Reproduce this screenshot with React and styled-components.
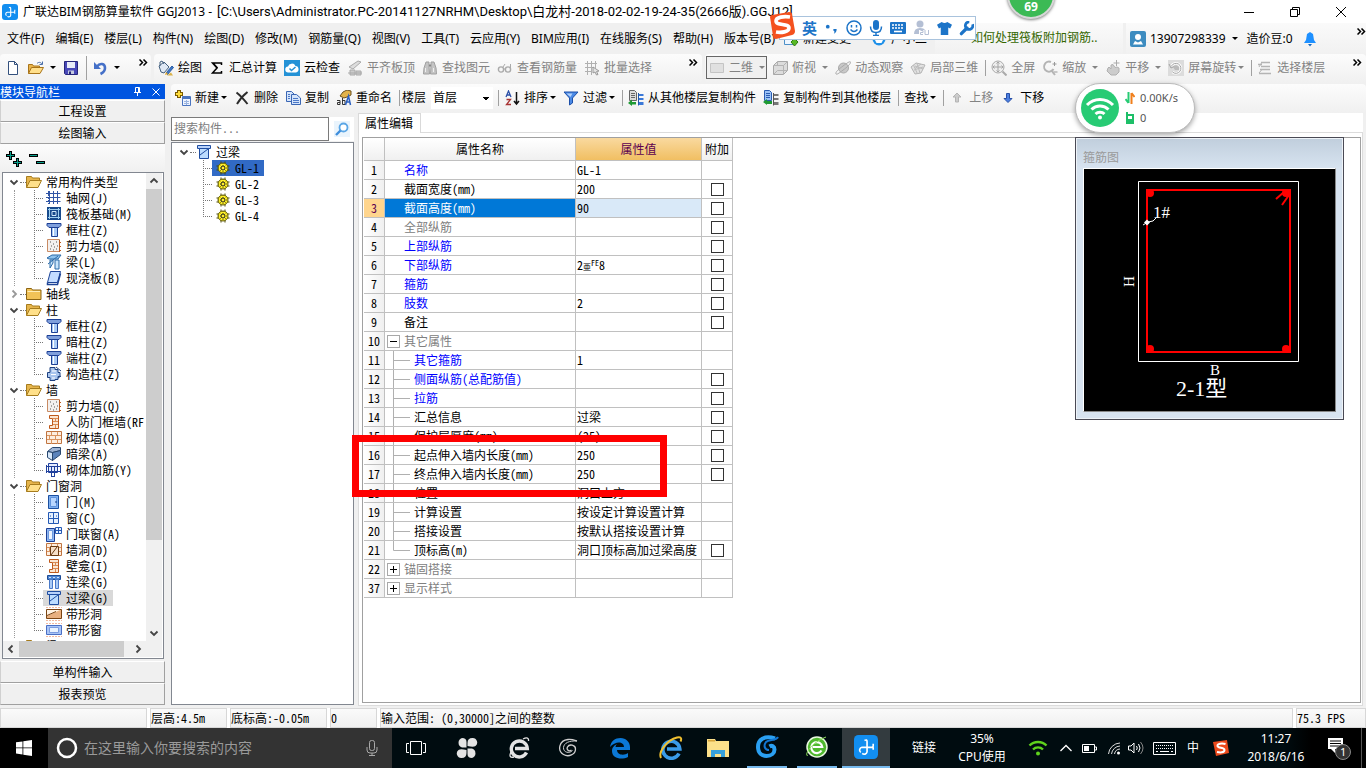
import styled, { createGlobalStyle, css } from "styled-components";

const UI_FONT = `"Noto Sans", "Noto Sans CJK SC", sans-serif`;
const SONG_FONT = `"Noto Sans CJK SC", "Liberation Mono", monospace`;

/* ---------- data ---------- */

const menus = [
  "文件(F)",
  "编辑(E)",
  "楼层(L)",
  "构件(N)",
  "绘图(D)",
  "修改(M)",
  "钢筋量(Q)",
  "视图(V)",
  "工具(T)",
  "云应用(Y)",
  "BIM应用(I)",
  "在线服务(S)",
  "帮助(H)",
  "版本号(B)"
];

const drawTools = [
  { icon: "paint", label: "绘图" },
  { icon: "sigma", label: "汇总计算" },
  { icon: "cloud", label: "云检查" },
  { icon: "alignTop", label: "平齐板顶", off: true },
  { icon: "binoculars", label: "查找图元", off: true },
  { icon: "glasses", label: "查看钢筋量", off: true },
  { icon: "batch", label: "批量选择", off: true }
];

const viewTools = [
  { icon: "cube", label: "俯视", arrow: "wide" },
  { icon: "planet", label: "动态观察" },
  { icon: "part3d", label: "局部三维" },
  { sep: true },
  { icon: "fullscreen", label: "全屏" },
  { icon: "zoom", label: "缩放", arrow: "wide" },
  { icon: "pan", label: "平移", arrow: "wide" },
  { icon: "rotate", label: "屏幕旋转", arrow: "tight" },
  { sep: true },
  { icon: "floors", label: "选择楼层" }
];

const navTree = [
  {
    label: "常用构件类型",
    open: true,
    items: [
      { icon: "axis", label: "轴网(J)" },
      { icon: "raft", label: "筏板基础(M)" },
      { icon: "column", label: "框柱(Z)" },
      { icon: "shear", label: "剪力墙(Q)" },
      { icon: "beam", label: "梁(L)" },
      { icon: "slab", label: "现浇板(B)" }
    ]
  },
  { label: "轴线", open: false, items: [] },
  {
    label: "柱",
    open: true,
    items: [
      { icon: "column", label: "框柱(Z)" },
      { icon: "column", label: "暗柱(Z)" },
      { icon: "column", label: "端柱(Z)" },
      { icon: "structCol", label: "构造柱(Z)" }
    ]
  },
  {
    label: "墙",
    open: true,
    items: [
      { icon: "shear", label: "剪力墙(Q)" },
      { icon: "niche", label: "人防门框墙(RF" },
      { icon: "brick", label: "砌体墙(Q)" },
      { icon: "hidden", label: "暗梁(A)" },
      { icon: "rebar", label: "砌体加筋(Y)" }
    ]
  },
  {
    label: "门窗洞",
    open: true,
    items: [
      { icon: "door", label: "门(M)" },
      { icon: "window", label: "窗(C)" },
      { icon: "doorWindow", label: "门联窗(A)" },
      { icon: "hole", label: "墙洞(D)" },
      { icon: "niche", label: "壁龛(I)" },
      { icon: "linkBeam", label: "连梁(G)" },
      { icon: "lintel", label: "过梁(G)", active: true },
      { icon: "stripHole", label: "带形洞" },
      { icon: "stripWindow", label: "带形窗" }
    ]
  },
  { label: "梁", open: true, items: [] }
];

const members = ["GL-1", "GL-2", "GL-3", "GL-4"];

const properties = [
  { no: 1, name: "名称", color: "blue", value: "GL-1", noBox: true },
  { no: 2, name: "截面宽度(mm)", value: "200" },
  { no: 3, name: "截面高度(mm)", value: "90", current: true },
  { no: 4, name: "全部纵筋", color: "gray", value: "" },
  { no: 5, name: "上部纵筋", color: "blue", value: "" },
  { no: 6, name: "下部纵筋", color: "blue", value: "2", steel: "8" },
  { no: 7, name: "箍筋", color: "blue", value: "" },
  { no: 8, name: "肢数", color: "blue", value: "2" },
  { no: 9, name: "备注", value: "" },
  { no: 10, name: "其它属性", color: "gray", value: "", toggle: "-", noBox: true },
  { no: 11, name: "其它箍筋", color: "blue", value: "1", child: true, noBox: true },
  { no: 12, name: "侧面纵筋(总配筋值)", color: "blue", value: "", child: true },
  { no: 13, name: "拉筋", color: "blue", value: "", child: true },
  { no: 14, name: "汇总信息", value: "过梁", child: true },
  { no: 15, name: "保护层厚度(mm)", value: "(25)", child: true },
  { no: 16, name: "起点伸入墙内长度(mm)", value: "250", child: true },
  { no: 17, name: "终点伸入墙内长度(mm)", value: "250", child: true },
  { no: 18, name: "位置", value: "洞口上方", child: true, noBox: true },
  { no: 19, name: "计算设置", value: "按设定计算设置计算", child: true, noBox: true },
  { no: 20, name: "搭接设置", value: "按默认搭接设置计算", child: true, noBox: true },
  { no: 21, name: "顶标高(m)", value: "洞口顶标高加过梁高度", child: true, last: true },
  { no: 22, name: "锚固搭接", color: "gray", value: "", toggle: "+", noBox: true },
  { no: 37, name: "显示样式", color: "gray", value: "", toggle: "+", noBox: true }
];

/* ---------- icons ---------- */

const columnShape = (
  <g>
    <path d="M1 1.500h14v2l-2 2H3l-2-2z" fill="#7f9fdc" stroke="#1c3f94" />
    <path d="M5.500 5.500h6v9h-6z" fill="#a9cbf7" stroke="#1c3f94" />
    <path d="M7.500 6v8" stroke="#fff" />
  </g>
);

const brickLines = (
  <path d="M1 5.500h14M1 9.500h14M5.500 2v3.500M11.500 2v3.500M3.500 6v3M9.500 6v3M5.500 10v4M11.500 10v4" stroke="#d9935f" />
);

const art = {
  newFile: (
    <>
      <path d="M3.500 1.500h6l3 3v10h-9z" fill="#fff" stroke="#33507d" />
      <path d="M9.500 1.500v3h3" fill="none" stroke="#33507d" />
    </>
  ),
  openFile: (
    <>
      <path d="M.5 13.500v-9h4l1 1.500h6v2" fill="#e9b44c" stroke="#a8741a" />
      <path d="M.5 13.500l3-6h12l-3.500 6z" fill="#ffdf8b" stroke="#a8741a" />
      <path d="M9 3.500c2-2 4-1 5 .5M14.500 1.500v3h-3" fill="none" stroke="#4a6ea9" />
    </>
  ),
  save: (
    <>
      <path d="M1.500 1.500h13v13h-12l-1-1z" fill="#4848b8" stroke="#26267a" />
      <path d="M4 2h8v6H4z" fill="#e8ecf8" />
      <path d="M5 10.500h6V14H5z" fill="#c5cbe0" />
      <path d="M6 11.500h2V14H6z" fill="#26267a" />
    </>
  ),
  undo: (
    <>
      <path d="M5 6.500c3-4 8-3 8 1.500 0 2.500-1.500 4.500-4.500 6" fill="none" stroke="#4570c8" strokeWidth="2.600" />
      <path d="M2 2v7h7z" fill="#4570c8" />
    </>
  ),
  paint: (
    <>
      <path d="M1 6l5-4 5 5-5 6-3-1z" fill="#dfe8f4" stroke="#44607f" />
      <path d="M2 6V2l2-1 2 3" fill="none" stroke="#44607f" />
      <path d="M8 13l6-7 1.500 1.500-6 7z" fill="#3c78c8" stroke="#2a5ca4" />
      <path d="M7 15l1-3 2 2z" fill="#e3a827" />
      <path d="M9 15.500h6l-2-3z" fill="#d9b24a" />
    </>
  ),
  sigma: <path d="M12.500 5V3h-9l4.500 5-4.500 5h9v-2M4 3l4.500 5M4 13h8" fill="none" stroke="#000" strokeWidth="1.500" />,
  cloud: (
    <>
      <rect width="16" height="16" fill="#2492d6" />
      <path d="M4.500 12.500a3 3 0 0 1-.5-6 4 4 0 0 1 7.500-.5 3.300 3.300 0 0 1 .5 6.500z" fill="#fff" />
      <path d="M5.500 8.500l2 2 4-3.500" fill="none" stroke="#2492d6" strokeWidth="1.500" />
    </>
  ),
  alignTop: (
    <>
      <path d="M2 7l9-6 3 1-8 7z" fill="#ddd" stroke="#aaa" />
      <path d="M3 10h5v5H3zM9 11h5v4H9zM1 13h14" fill="#ccc" stroke="#aaa" />
    </>
  ),
  binoculars: (
    <>
      <path d="M4 2h3v4l.5 8h-6L2 8zM9 2h3l2 6 .5 6h-6L9 6z" fill="#c4c4c4" stroke="#a0a0a0" />
      <path d="M7 5.500h2" stroke="#888" strokeWidth="2" />
      <path d="M3.500 8v4M11.500 8v4" stroke="#eee" />
    </>
  ),
  glasses: (
    <>
      <circle cx="4" cy="9.500" r="2.600" fill="none" stroke="#aaa" strokeWidth="1.400" />
      <circle cx="11" cy="9.500" r="2.600" fill="none" stroke="#aaa" strokeWidth="1.400" />
      <path d="M6.500 9h2M6 7l2-3M13.500 8V4" fill="none" stroke="#aaa" />
    </>
  ),
  batch: (
    <>
      <path d="M1 3.500h12M1 7.500h9M1 11.500h7M3.500 1v14M7.500 1v14M11.500 1v7" stroke="#b0b0b0" />
      <path d="M9 7l6 4-2.500.5 1.500 3-1.500.5-1.500-3-2 1z" fill="#e4e4e4" stroke="#999" />
    </>
  ),
  flat: <path d="M1.500 3.500h13v9h-13z" fill="#e0e0e0" stroke="#c4c4c4" />,
  cube: (
    <>
      <path d="M1.500 5.500l4-4h10v9l-4 4h-10z" fill="#dcdcdc" stroke="#a8a8a8" />
      <path d="M1.500 5.500h10v9M11.500 5.500l4-4M5.500 1.500v4M1.500 14.500l4-4h10" fill="none" stroke="#b4b4b4" />
    </>
  ),
  planet: (
    <>
      <circle cx="8.500" cy="8" r="5" fill="#c8c8c8" stroke="#aaa" />
      <path d="M1 14c-1-2 3-5 7-8s7-5 7.500-4-2 4-6 7-7.500 6-8.500 5z" fill="none" stroke="#aaa" />
    </>
  ),
  part3d: (
    <>
      <path d="M1 7l5-4 9 2-4 8-6 1z" fill="#e2e2e2" stroke="#b4b4b4" />
      <path d="M3.500 5l4 9M7 3.500l3 9.500M11 4l-6 4.500M13 7l-9 3M5 6l8 3" fill="none" stroke="#bcbcbc" />
    </>
  ),
  fullscreen: (
    <>
      <circle cx="7" cy="7" r="6" fill="#eee" stroke="#aaa" />
      <path d="M7 2v10M2 7h10M5.500 3.500L7 2l1.500 1.500M5.500 10.500L7 12l1.500-1.500M3.500 5.500L2 7l1.500 1.500M10.500 5.500L12 7l-1.500 1.500" fill="none" stroke="#a4a4a4" />
      <path d="M11.500 11.500l4 4" stroke="#aaa" strokeWidth="2" />
    </>
  ),
  zoom: (
    <>
      <path d="M9 2a5 5 0 1 0 2.500 7" fill="none" stroke="#b4b4b4" strokeWidth="2" />
      <path d="M10.500 4h4M12.500 2v4M11.500 12h4" stroke="#999" />
      <path d="M9 10l4 5" stroke="#b4b4b4" strokeWidth="2" />
    </>
  ),
  pan: (
    <>
      <path d="M3 8l1-1 2 2V5l2-.5 2 3 2-.500 2 1v4l-3 3H6l-4-4z" fill="#ccc" stroke="#b0b0b0" />
      <path d="M11.500 0v6M8.500 3h6" stroke="#aaa" />
    </>
  ),
  rotate: (
    <>
      <rect width="16" height="16" fill="#dcdcdc" />
      <path d="M3.500 6a5 5 0 1 1 1 6" fill="none" stroke="#fff" strokeWidth="2.500" />
      <path d="M3.500 6a5 5 0 1 1 1 6M1 4l2 4 4-2" fill="none" stroke="#a4a4a4" />
      <path d="M5 7l3-2 3 2v3H7z" fill="#bbb" />
    </>
  ),
  floors: (
    <>
      <path d="M1 4.500h4M4 2.500h9M4 6.500h9M3 9.500h10M2 13.500h12" fill="none" stroke="#b4b4b4" strokeWidth="1.600" />
      <path d="M4.500 3L2 7M5 9.500L2 13" stroke="#b4b4b4" />
    </>
  ),
  create: (
    <>
      <path d="M4 0v8M0 4h8" stroke="#7a5a00" strokeWidth="4" />
      <path d="M4 1v6M1 4h6" stroke="#ffdc3c" strokeWidth="2" />
      <path d="M7.500 6.500h8v9h-8z" fill="#eef4ff" stroke="#4a74c0" />
      <path d="M8 8h7" stroke="#4a74c0" strokeWidth="2" />
      <path d="M9 11.500h5M9 13.500h5M11.500 10v5" stroke="#9ab4e0" />
    </>
  ),
  remove: <path d="M2.500 2.500c4 3 7 6.500 11 11.500M13.500 2c-4 3-7.500 7-10.500 12" fill="none" stroke="#2c2c2c" strokeWidth="2" />,
  copy: (
    <>
      <path d="M1.500 1.500h5l3 3v7h-8z" fill="#d4e4fb" stroke="#3a66b4" />
      <path d="M6.500 4.500h5l4 3.500v6.500h-9z" fill="#d4e4fb" stroke="#3a66b4" />
      <path d="M3 4.500h2M3 6.500h2M3 8.500h2M8 8.500h5M8 10.500h6M8 12.500h6" stroke="#4c78c6" />
    </>
  ),
  rename: (
    <>
      <path d="M4 6l3-4 4-2 4 1v4l-4 2-3 1z" fill="#e2b34b" stroke="#6a5120" />
      <path d="M1 10.500h3v4H1.500v-2H4M6.500 8v6.500h2.500v-4H6.500" fill="none" stroke="#333" />
      <path d="M9.500 15l3-9 2 9M10 12h4" fill="none" stroke="#2a5fc0" strokeWidth="1.500" />
    </>
  ),
  sort: (
    <>
      <path d="M2 7l2.500-6L7 7M3 5h3" fill="none" stroke="#2b50a8" strokeWidth="1.300" />
      <path d="M2.500 9.500h4l-4 5h4.500" fill="none" stroke="#a83434" strokeWidth="1.300" />
      <path d="M12.500 2v11M10 11l2.500 3 2.500-3" fill="none" stroke="#111" strokeWidth="1.500" />
    </>
  ),
  filter: (
    <>
      <path d="M1 2h14l-5.500 6v5l-3 2V8z" fill="#4b8ae6" stroke="#1c4fa8" />
      <path d="M3.500 3.500h6L7.500 7z" fill="#b4d2fa" />
    </>
  ),
  copyFrom: (
    <>
      <path d="M1.500.5h5l2 2v8h-7z" fill="#dcdcdc" stroke="#666" />
      <path d="M3 3.500h4M3 5.500h4M3 7.500h4" stroke="#666" />
      <path d="M11 4h4.500v2H11zM11 8h4.500v2H11zM11 12h4.500v3H11z" fill="#3a78d8" />
      <path d="M10.500 3v12.500" stroke="#2458a8" />
      <path d="M0 13l4-3.500v2.500h4v2.500H4v1.500z" fill="#1f9a34" />
    </>
  ),
  copyTo: (
    <>
      <path d="M1.500.5h5l2 2v8h-7z" fill="#9cc2f6" stroke="#2a5cb0" />
      <path d="M3 3.500h4M3 5.500h4M3 7.500h4" stroke="#2a5cb0" />
      <path d="M11 4h4.500v2H11zM11 8h4.500v2H11zM11 12h4.500v3H11z" fill="#777" />
      <path d="M10.500 3v12.500" stroke="#555" />
      <path d="M0 12l4-3v2h5v3H4v1z" fill="#1f9a34" />
    </>
  ),
  moveUp: <path d="M8 3l4 4H9.500v5h-3V7H4z" fill="#ccc" stroke="#b4b4b4" />,
  moveDown: <path d="M8 12.500l4-4H9.500v-5h-3v5H4z" fill="#4b7fe0" stroke="#274fa8" />,
  folderOpen: (
    <>
      <path d="M.5 13.500v-11h5l1 1.500h7v3" fill="#e6b54c" stroke="#a67c1e" />
      <path d="M.5 13.500l3.500-7h11.500l-3.500 7z" fill="#ffe08a" stroke="#a67c1e" />
    </>
  ),
  folder: (
    <>
      <path d="M.5 13.500v-11h5l1 1.500h8.500v9.500z" fill="#f1c257" stroke="#8c6412" />
      <path d="M1.500 5.500h12.500" stroke="#ffeeb8" />
    </>
  ),
  axis: (
    <>
      <path d="M3.500 1v13M7.500 1v13M11.500 1v13M0 3.500h14M0 7.500h14M0 11.500h14" stroke="#3156a6" />
      <path d="M2.500 1v13M12.500 3.500h3M12.500 7.500h3M12.500 11.500h3" stroke="#3156a6" strokeDasharray="2 1" />
    </>
  ),
  raft: (
    <>
      <path d="M1 1h14v13H1z" fill="#174a8c" />
      <path d="M2 3.500h12M2 11.500h12M3.500 2v11M12.500 2v11" stroke="#9fd0f0" />
      <path d="M6 5.500h4v4H6z" fill="#174a8c" stroke="#cfe8fa" />
    </>
  ),
  column: columnShape,
  shear: (
    <>
      <path d="M1.500 1.500h12v12h-12z" fill="#f3f0ee" stroke="#c98b64" />
      <path d="M4 4h1M7 6h1M10 4h1M5 8h1M8 9h1M11 8h1M4 11h1M7 12h1M10 11h1" stroke="#555" />
      <path d="M13.500 2v12M13 4.500h2M13 8.500h2M13 12.500h2" stroke="#c05a1c" />
    </>
  ),
  beam: (
    <>
      <path d="M1 4l5-3h9l-3 4H3z" fill="#8fc3ee" stroke="#2a6aa8" />
      <path d="M4 6h3v3l-3 5zM9 6h4v9H9z" fill="#c8e4fa" stroke="#2a6aa8" />
      <path d="M2 10l10-8" stroke="#2a6aa8" />
    </>
  ),
  slab: (
    <>
      <path d="M4.500 1.500h10l-3 11h-10z" fill="#c3dcff" stroke="#1c4396" />
      <path d="M1.500 12.500v2h10l3-11" fill="none" stroke="#1c4396" strokeWidth="1.500" />
    </>
  ),
  structCol: (
    <>
      <path d="M4 1.500h5v2h3v3h2v4h-2v3H9v1H4v-3H1.500v-5H4z" fill="#a9c5ee" stroke="#1d4080" />
      <path d="M6 5h4M5 8.500h5M6 12h3" stroke="#fff" />
      <path d="M10 1l5 4M12 12l3-2" stroke="#1d4080" />
    </>
  ),
  niche: (
    <>
      <path d="M3.500 1.500h9v13h-9v-3h3v-7h-3z" fill="#fbe6d2" stroke="#c05a1c" />
      <path d="M7 4.500h5M7 7.500h5M7 10.500h5M9.500 5v3M9.500 11v3" stroke="#d98b54" />
    </>
  ),
  brick: (
    <>
      <path d="M.5 1.500h15v12H.5z" fill="#fdeee0" stroke="#c07440" />
      {brickLines}
    </>
  ),
  hidden: (
    <>
      <path d="M1.500 5.500l5-4h8v3l-8 2z" fill="#9fb4d4" stroke="#27466e" />
      <path d="M1.500 5.500l5 1v8l-5-3z" fill="#d7e8fa" stroke="#27466e" />
      <path d="M6.500 6.500l8-2v4l-8 6z" fill="#5c84bc" stroke="#27466e" />
    </>
  ),
  rebar: (
    <>
      <path d="M2.500 1.500h9v9h-9z" fill="#e4ecff" stroke="#20409c" />
      <path d="M0 4.500h15M0 9.500h15M5.500 4v11M8.500 4v11M.5 3v8M14.500 3v8M5 14.500h4" stroke="#20409c" />
    </>
  ),
  door: (
    <>
      <path d="M2.500 1.500h10v13h-10z" fill="#7fb0f0" stroke="#1b4fa0" />
      <path d="M4.500 3.500h6v9h-6z" fill="#b8d6ff" stroke="#5f92dc" />
      <path d="M9 8h2" stroke="#123a80" />
    </>
  ),
  window: (
    <>
      <path d="M2.500 2.500h10v11h-10z" fill="#e6f1ff" stroke="#2459b4" />
      <path d="M7.500 2v11M2 8.500h11" stroke="#2459b4" />
      <path d="M4 6h1M10 6h1" stroke="#2459b4" />
    </>
  ),
  doorWindow: (
    <>
      <path d="M.5 2.500h8v13h-8z" fill="#8fb8f2" stroke="#1d3f96" />
      <path d="M2.500 4.500h4v9h-4z" fill="#eef5ff" stroke="#6f9ae0" />
      <path d="M9.500 1.500h6v6h-6z" fill="#e6f1ff" stroke="#2459b4" />
      <path d="M12.500 1v7M9 4.500h7" stroke="#2459b4" />
    </>
  ),
  hole: (
    <>
      <path d="M.5 1.500h15v12H.5z" fill="#fdeee0" stroke="#c07440" />
      {brickLines}
      <path d="M4.500 4.500h8v9h-8z" fill="#f7dfc8" stroke="#6b3a12" />
      <path d="M5 13l6-8" stroke="#6b3a12" />
    </>
  ),
  linkBeam: (
    <>
      <path d="M1.500 1.500h13v4h-13z" fill="#4d86d4" stroke="#1d4a94" />
      <path d="M3.500 5.500h3v9h-3zM9.500 5.500h3v9h-3z" fill="#a9cbf7" stroke="#4a7ac8" />
      <path d="M3 3.500h2M7 3.500h2M11 3.500h2" stroke="#cfe0fa" />
    </>
  ),
  lintel: (
    <>
      <path d="M1.500 1.500h13v3h-13z" fill="#b8d2fa" stroke="#1f4da0" />
      <path d="M3.500 4.500h9v10h-9z" fill="#bcdcff" stroke="#1f4da0" />
      <path d="M4 11l4-3 4-3" fill="none" stroke="#1f4da0" />
    </>
  ),
  stripHole: (
    <>
      <path d="M0 1.500h16M0 14.500h16" stroke="#f2b8a0" strokeDasharray="2 1" />
      <path d="M.5 3.500h15v9H.5z" fill="#e8b080" stroke="#7a4514" />
      <path d="M1 10l13-6H1z" fill="#fff3e4" />
      <path d="M1 9.500l9-4" stroke="#7a4514" />
    </>
  ),
  stripWindow: (
    <>
      <path d="M0 1.500h16M0 14.500h16" stroke="#f2b8a0" strokeDasharray="2 1" />
      <path d="M.5 3.500h15v9H.5z" fill="#a8c4f6" stroke="#4a6ec4" />
      <path d="M3.500 5.500h9v5h-9z" fill="#eaf3ff" stroke="#7c9ce0" />
    </>
  ),
  gear: (
    <>
      <path d="M5.500 2.500h1M9.500 2.500h1M5.500 13.500h1M9.500 13.500h1M2.500 5.500v1M2.500 9.500v1M13.500 5.500v1M13.500 9.500v1" stroke="#4a4600" strokeWidth="2" />
      <circle cx="8" cy="8" r="5" fill="#fff02a" stroke="#5c5600" />
      <path d="M8 3v10M3 8h10M4.500 4.500l7 7M11.500 4.500l-7 7" stroke="#6e6800" strokeDasharray="1 1" />
      <circle cx="8" cy="8" r="2" fill="#fff02a" stroke="#222" />
    </>
  ),
  search: (
    <>
      <rect width="16" height="16" fill="#eaf4fc" />
      <circle cx="9.500" cy="6.500" r="4" fill="#fff" stroke="#5aa6e6" strokeWidth="1.800" />
      <path d="M6.500 9.500l-4.500 4.500" stroke="#3f8edc" strokeWidth="2.400" />
    </>
  ),
  user: (
    <>
      <rect width="16" height="16" rx="2" fill="#3d8cc0" />
      <circle cx="8" cy="6" r="3" fill="#fff" />
      <path d="M3 13.500l2-3.500 3 1.500 3-1.500 2 3.500z" fill="#fff" />
    </>
  ),
  bell: (
    <>
      <path d="M8 1l3 2 1 6 2 3H2l2-3 1-6z" fill="#1e90ff" />
      <path d="M6 13h4l-2 2.500z" fill="#1467c0" />
    </>
  ),
  addCase: (
    <>
      <path d="M1.500 4.500h9v9h-9z" fill="#eef6ff" stroke="#4d90c8" />
      <path d="M8 11l3.500-3.500L15 11l-3.500 4z" fill="#58b825" stroke="#2f7d10" />
    </>
  ),
  helper: (
    <>
      <circle cx="8" cy="8" r="6.500" fill="#1f90e8" />
      <path d="M4 9h8l-1.500 3h-5z" fill="#fff" />
    </>
  ),
  fileLogo: (
    <>
      <rect width="16" height="16" rx="3" fill="#128ef0" />
      <path d="M7 3.700q1.700-1 1.700.8v6.800a1.900 1.900 0 0 1-3.200 1M12.800 5.800v1.400a1 1 0 0 1-1 1H5.300a1.900 1.900 0 0 0-.8 3.400M12.800 8.200v1.600" fill="none" stroke="#fff" strokeWidth="1.100" />
    </>
  )
};

const Glyph = styled.svg`
  flex: none;
  display: block;
  width: ${(p) => p.$w || 16}px;
  height: ${(p) => p.$h || p.$w || 16}px;
`;

const MoreGlyph = styled(Glyph)`
  align-self: flex-start;
  margin-top: 5px;
`;

const Icon = ({ name, size }) => (
  <Glyph $w={size} viewBox="0 0 16 16" fill="none" aria-hidden="true">
    {art[name]}
  </Glyph>
);

const More = () => (
  <MoreGlyph $w={9} $h={7} viewBox="0 0 9 7" fill="none" aria-hidden="true">
    <path d="M.5.5l3 3-3 3M4.500.5l3 3-3 3" stroke="#000" strokeWidth="1.500" />
  </MoreGlyph>
);

const Chevron = ({ dir, color = "#444" }) => {
  const turn = { down: 0, left: 90, up: 180, right: 270 }[dir];
  return (
    <Glyph $w={12} viewBox="0 0 12 12" fill="none" aria-hidden="true">
      <path d="M2.500 4.500L6 8l3.500-3.500" stroke={color} strokeWidth="1.800" transform={`rotate(${turn} 6 6)`} />
    </Glyph>
  );
};

const Elbow = ({ last }) => (
  <Glyph $w={9} $h={16} viewBox="0 0 9 16" fill="none" aria-hidden="true">
    <path d={`M.5 0V${last ? 8 : 16}`} stroke="#777" strokeDasharray="1 1" />
    <path d="M0 8.500H9" stroke="#777" strokeDasharray="1 1" />
  </Glyph>
);

/* ---------- shell ---------- */

const GlobalStyle = createGlobalStyle`
  * { box-sizing: border-box; }
  body {
    margin: 0;
    overflow: hidden;
    background: #f0f0f0;
    font: 12px/16px ${UI_FONT};
    color: #000;
  }
  button, input, select { font: inherit; color: inherit; }
  ul { margin: 0; padding: 0; list-style: none; }
`;

const plainButton = css`
  border: 0;
  padding: 0;
  margin: 0;
  background: none;
  white-space: nowrap;
`;

const song = css`
  font-family: ${SONG_FONT};
  font-size: 12px;
  font-feature-settings: "hwid";
`;

const Page = styled.div`
  position: relative;
  display: flex;
  flex-direction: column;
  height: 100vh;
`;

const TitleBar = styled.header`
  display: flex;
  align-items: center;
  gap: 5px;
  height: 23px;
  padding-left: 2px;
  background: #fff;
  white-space: nowrap;
`;

const FilePath = styled.span`
  font-family: Roboto, "Noto Sans CJK SC", sans-serif;
  font-size: 13px;
`;

const WindowButtons = styled.div`
  display: flex;
  margin-left: auto;
  padding-right: 2px;
`;

const WindowButton = styled.button`
  ${plainButton}
  display: grid;
  place-items: center;
  width: 46px;
  height: 20px;
`;

const MenuBar = styled.nav`
  display: flex;
  height: 31px;
  line-height: 29px;
  white-space: nowrap;
`;

const MenuGroup = styled.div`
  display: flex;
  gap: 11px;
  padding-left: 7px;
`;

const MenuButton = styled.button`
  ${plainButton}
`;

const BeanButton = styled(MenuButton)`
  padding: 0 5px;
`;

const Promo = styled.div`
  display: flex;
  align-items: center;
  gap: 4px;
  padding-left: 8px;
`;

const Tip = styled.a`
  flex: 1;
  margin-left: 8px;
  padding-left: 36px;
  color: #336600;
  text-decoration: none;
  background: linear-gradient(#fafafa, #f1f1f1);
`;

const Account = styled.div`
  display: flex;
  align-items: center;
  gap: 4px;
  width: 240px;
  margin-left: 3px;
  padding-left: 4px;
  background: linear-gradient(#fafafa, #f1f1f1);
`;

const Spacer = styled.span`
  flex: ${(p) => p.$share || 1};
  min-width: ${(p) => p.$min || 0}px;
`;

const ToolRow = styled.div`
  display: flex;
  gap: 3px;
  height: 30px;
`;

const ToolStrip = styled.div`
  display: flex;
  align-items: center;
  gap: 7px;
  height: 29px;
  min-width: ${(p) => p.$min || 0}px;
  padding: 0 ${(p) => p.$right || 4}px 2px ${(p) => p.$left || 4}px;
  flex: ${(p) => (p.$grow ? 1 : "none")};
  border-radius: 4px;
  background: linear-gradient(#fcfcfc, #f0f0f0);
  white-space: nowrap;
`;

const ToolButton = styled.button`
  ${plainButton}
  display: flex;
  align-items: center;
  gap: 4px;
  color: ${(p) => (p.$off ? "#838383" : "#000")};
  ${(p) =>
    p.$framed &&
    css`
      width: 61px;
      height: 23px;
      margin-right: -2px;
      padding-left: 2px;
      border: 1px solid #666;
      background: #f0f0f0;
    `}
`;

const Arrow = styled.span`
  width: ${(p) => (p.$wide ? 8 : 4)}px;
  display: flex;
  justify-content: flex-end;

  &::after {
    content: "";
    flex: none;
    border: 3px solid transparent;
    border-top-color: currentColor;
    border-bottom: 0;
  }
`;

const Divider = styled.span`
  width: 1px;
  height: ${(p) => p.$h || 16}px;
  margin-right: -2px;
  background: #a0a0a0;
`;

const FloorLabel = styled.label`
  margin-left: -3px;
`;

const FloorSelect = styled.select`
  appearance: none;
  width: 62px;
  height: 22px;
  margin: 0 -2px;
  padding: 0 2px;
  border: 0;
  border-radius: 0;
  background:
    linear-gradient(#000, #000) 52px 10px / 6px 1px no-repeat,
    linear-gradient(#000, #000) 53px 11px / 4px 1px no-repeat,
    linear-gradient(#000, #000) 54px 12px / 2px 1px no-repeat,
    #fff;
`;

const Body = styled.main`
  display: flex;
  flex: 1;
  min-height: 0;
`;

/* ---------- module navigation ---------- */

const NavPanel = styled.aside`
  ${song}
  display: flex;
  flex-direction: column;
  width: 165px;
  padding-bottom: 3px;
`;

const NavTitle = styled.div`
  display: flex;
  align-items: center;
  height: 15px;
  margin-bottom: 1px;
  flex: none;
  padding-right: 4px;
  gap: 7px;
  color: #fff;
  background: #0055e0;
`;

const NavTitleButton = styled.button`
  ${plainButton}
  display: grid;
  place-items: center;
  width: 11px;
  height: 15px;
`;

const NavSection = styled.button`
  ${plainButton}
  height: 22px;
  flex: none;
  border: 1px solid #a0a0a0;
  border-top-color: #fff;
  border-left-color: #d0d0d0;
  background: #f0f0f0;
`;

const NavTools = styled.div`
  display: flex;
  align-items: center;
  gap: 7px;
  height: 28px;
  flex: none;
  padding: 2px 6px 0;
  background: linear-gradient(#fcfcfc, #f0f0f0);
`;

const NavTreeBox = styled.div`
  display: grid;
  grid-template: minmax(0, 1fr) 16px / minmax(0, 1fr) 16px;
  flex: 1;
  min-height: 0;
  margin: 0 1px 2px 2px;
  padding: 0 1px 1px 0;
  border: 1px solid #828790;
  background: #fff;
`;

const NavList = styled.ul`
  overflow: hidden;
  padding-top: 1px;
`;

const TreeRow = styled.div`
  display: flex;
  align-items: center;
  height: 16px;
  padding-left: ${(p) => p.$indent || 0}px;
  white-space: nowrap;
`;

const Dots = styled.span`
  width: 6px;
  border-top: 1px dotted #777;
`;

const Branch = styled.ul`
  margin-left: ${(p) => (p.$root ? 31 : 11)}px;
  padding-left: ${(p) => (p.$root ? 0 : 19)}px;
  border-left: ${(p) => (p.$root ? 0 : "1px dotted #999")};
`;

const TreeButton = styled.button`
  ${plainButton}
  display: flex;
  align-items: center;
  gap: 4px;
  height: 16px;
  line-height: 16px;
  padding: 0 5px 0 ${(p) => (p.$flush ? 0 : 3)}px;
  background: ${(p) => p.$bg || "none"};
`;

const VScroll = styled.div`
  display: flex;
  flex-direction: column;
  background: #f0f0f0;
`;

const HScroll = styled.div`
  display: flex;
  background: #f0f0f0;
`;

const ScrollButton = styled.button`
  ${plainButton}
  display: grid;
  place-items: center;
  width: 16px;
  height: 16px;
`;

const Thumb = styled.div`
  background: #cdcdcd;
  flex: ${(p) => p.$share};
`;

const Corner = styled.div`
  background: #f0f0f0;
`;

/* ---------- component list ---------- */

const WorkArea = styled.div`
  display: flex;
  flex-direction: column;
  flex: 1;
  min-width: 0;
  margin-left: 6px;
`;

const Panes = styled.div`
  display: flex;
  flex: 1;
  min-height: 0;
  gap: 4px;
`;

const ListPane = styled.section`
  ${song}
  display: flex;
  flex-direction: column;
  width: 183px;
  padding: 4px 0 3px;
`;

const SearchRow = styled.form`
  display: flex;
  align-items: center;
  height: 24px;
  margin-bottom: 1px;
  background: #fff;
`;

const SearchInput = styled.input`
  width: 158px;
  height: 24px;
  padding: 0 2px 4px;
  border: 1px solid #7a7a7a;

  &::placeholder {
    color: #808080;
  }
`;

const SearchButton = styled.button`
  ${plainButton}
  display: grid;
  place-items: center;
  flex: 1;
`;

const MemberTree = styled.div`
  flex: 1;
  padding-top: 1px;
  border: 1px solid #828790;
  background: #fff;
`;

/* ---------- property editor ---------- */

const Editor = styled.section`
  ${song}
  position: relative;
  display: flex;
  flex-direction: column;
  flex: 1;
  min-width: 0;
  margin-right: 3px;
  padding-bottom: 2px;
`;

const Tabs = styled.div`
  display: flex;
  height: 20px;
  background: #fff;
  border-bottom: 1px solid #dcdcdc;
`;

const Tab = styled.button`
  ${plainButton}
  height: 20px;
  padding: 0 7px 1px 6px;
  border: 1px solid #d9d9d9;
  border-bottom: 0;
  background: #fff;
`;

const GridFrame = styled.div`
  flex: 1;
  display: flex;
  min-height: 0;
  padding: 4px 1px 2px 3px;
  border: 1px solid #dcdcdc;
  border-top: 0;
  background: #fff;
`;

const Grid = styled.div`
  position: relative;
  flex: 1;
  border: 1px solid #a0a0a0;
  padding-left: 1px;
`;

const Table = styled.table`
  table-layout: fixed;
  width: 369px;
  border-collapse: separate;
  border-spacing: 0;

  th,
  td {
    height: 19px;
    padding: 0 1px;
    border: solid #c0c0c0;
    border-width: 0 1px 1px 0;
    line-height: 18px;
    font-weight: normal;
    white-space: nowrap;
    overflow: hidden;
  }

  thead th {
    height: 23px;
    padding: 0;
    background: linear-gradient(#fff, #f0f0f0);
  }
`;

const ValueHead = styled.th`
  && {
    color: #5c0050;
    background: linear-gradient(#f9d99f, #f1bf62);
  }
`;

const RowNo = styled.th`
  && {
    padding: 0;
    color: ${(p) => (p.$current ? "#5c0050" : "#000")};
    background: ${(p) => (p.$current ? "#ffd58d" : "linear-gradient(90deg, #fff, #f0f0f0)")};
  }
`;

const textColors = { blue: "#0000ff", gray: "#808080" };

const NameCell = styled.td`
  && {
    padding: 0;
    color: ${(p) => (p.$current ? "#fff" : textColors[p.$color] || "#000")};
    background: ${(p) => (p.$current ? "#0078d7" : "#fff")};
  }
`;

const NameLine = styled.div`
  display: flex;
  align-items: center;
  height: 18px;
  gap: 4px;
  padding-left: ${(p) => (p.$child ? 8 : p.$toggle ? 2 : 19)}px;
`;

const Toggle = styled.button`
  ${plainButton}
  display: grid;
  place-items: center;
  width: 13px;
  height: 13px;
  border: 1px solid #a8a8a8;
  background: #fff;
`;

const ValueCell = styled.td`
  && {
    background: ${(p) => (p.$current ? "#d9e9f8" : "#fff")};
  }
`;

const BoxCell = styled.td`
  text-align: center;
`;

const Check = styled.input`
  appearance: none;
  display: block;
  width: 13px;
  height: 13px;
  margin: 0 auto;
  border: 1px solid #333;
  background: #fff;
`;

const SteelMark = styled.span`
  font-size: 8px;
  line-height: 0;

  sup {
    font-size: 8px;
    line-height: 0;
    vertical-align: 4px;
  }
`;

const RedFrame = styled.div`
  position: absolute;
  left: -6px;
  top: 322px;
  width: 315px;
  height: 62px;
  border: 7px solid #f00;
  pointer-events: none;
`;

const StirrupWindow = styled.figure`
  position: absolute;
  top: -1px;
  right: 16px;
  margin: 0;
  padding: 8px 7px 7px;
  border: 1px solid #4a4a55;
  background: linear-gradient(#c0cedc, #d7e3f0 30px);
  box-shadow: inset 0 0 0 1px #eef3f8;

  figcaption {
    line-height: 22px;
    color: #9a9a9a;
  }
`;

const StirrupCanvas = styled.svg`
  display: block;
  border: 1px solid #888;
  border-top-color: #fff;
  border-left-color: #fff;
  background: #000;
  font-family: "Liberation Serif", "Noto Sans CJK SC", serif;
`;

/* ---------- status bar ---------- */

const StatusBar = styled.footer`
  ${song}
  display: flex;
  gap: 3px;
  height: 20px;
  background: #fff;
`;

const StatusCell = styled.div`
  width: ${(p) => p.$w}px;
  flex: ${(p) => (p.$grow ? 1 : "none")};
  border: 1px solid #d7d7d7;
  line-height: 18px;
  white-space: nowrap;
  background: linear-gradient(#fafafa, #f0f0f0);
`;

/* ---------- overlays ---------- */

const ImeBar = styled.div`
  position: absolute;
  top: 16px;
  left: 779px;
  display: flex;
  align-items: center;
  gap: 7px;
  height: 24px;
  padding: 0 1px 0 22px;
  border: 1px solid #a9c3dd;
  background: #fff;
  color: #1c74c8;
`;

const ImeLogo = styled.svg`
  position: absolute;
  left: -12px;
  top: -5px;
`;

const ImeMode = styled.strong`
  font-size: 15px;
`;

const Score = styled.div`
  position: absolute;
  top: -29px;
  left: 1007px;
  width: 48px;
  height: 48px;
  padding-top: 26px;
  border: 2px solid #d7d7d7;
  border-radius: 50%;
  box-shadow: 0 1px 3px rgba(0, 0, 0, 0.5);
  background: #3cba55;
  color: #fff;
  font-weight: bold;
  text-align: center;
`;

const NetPill = styled.div`
  position: absolute;
  top: 83px;
  left: 1075px;
  display: flex;
  align-items: center;
  gap: 6px;
  width: 120px;
  height: 50px;
  padding-left: 5px;
  border: 1px solid #bbb;
  border-radius: 25px;
  box-shadow: 0 2px 5px rgba(0, 0, 0, 0.35);
  background: #fff;
  color: #555;
  font-size: 11px;
  line-height: 20px;
`;

const NetLine = styled.div`
  display: flex;
  align-items: center;
  gap: 5px;
`;

/* ---------- taskbar ---------- */

const TaskBar = styled.footer`
  display: flex;
  align-items: center;
  height: 40px;
  color: #fff;
  background: linear-gradient(90deg, #000c10 94%, #000 96%);
  white-space: nowrap;
`;

const StartButton = styled.button`
  ${plainButton}
  display: grid;
  place-items: center;
  width: 48px;
  height: 40px;
  background: #000;
`;

const TaskSearch = styled.label`
  display: flex;
  align-items: center;
  gap: 6px;
  width: 344px;
  height: 40px;
  padding: 0 13px 0 8px;
  background: #333;
`;

const TaskInput = styled.input`
  flex: 1;
  min-width: 0;
  padding: 0;
  border: 0;
  background: none;
  font-size: 14px;

  &::placeholder {
    color: #9a9a9a;
  }
`;

const TaskApp = styled.button`
  ${plainButton}
  display: grid;
  place-items: center;
  width: ${(p) => p.$w || 50}px;
  height: 40px;
  background: ${(p) => (p.$active ? "#333b3f" : "none")};

  &::after {
    content: "";
    display: ${(p) => (p.$open || p.$active ? "block" : "none")};
    width: ${(p) => (p.$active ? "100%" : "40px")};
    height: 2px;
    background: #76b9ed;
  }

  ${(p) =>
    (p.$open || p.$active) &&
    css`
      grid-template-rows: 38px 2px;
    `}
`;

const Tray = styled.div`
  display: flex;
  align-items: center;
  margin-left: auto;
`;

const TrayItem = styled.span`
  display: grid;
  place-items: center;
  width: ${(p) => p.$w}px;
  text-align: center;
  line-height: ${(p) => (p.$two ? 18 : 16)}px;
`;

const ShowDesktop = styled.button`
  ${plainButton}
  width: 5px;
  height: 40px;
  border-left: 1px solid #555;
`;

/* ---------- pieces ---------- */

function Tool({ icon, label, off, arrow }) {
  return (
    <ToolButton $off={off}>
      {icon && <Icon name={icon} />}
      {label}
      {arrow && <Arrow $wide={arrow === "wide"} />}
    </ToolButton>
  );
}

function NavTree() {
  return (
    <NavList>
      {navTree.map((group) => (
        <li key={group.label}>
          <TreeRow $indent={5}>
            <Chevron dir={group.open ? "down" : "right"} color={group.open ? "#444" : "#999"} />
            <Dots />
            <TreeButton $flush>
              <Icon name={group.open ? "folderOpen" : "folder"} />
              {group.label}
            </TreeButton>
          </TreeRow>
          {group.items.length > 0 && (
            <Branch>
              {group.items.map((item, i) => (
                <li key={item.label}>
                  <TreeRow>
                    <Elbow last={i === group.items.length - 1} />
                    <TreeButton $bg={item.active && "#d9d9d9"}>
                      <Icon name={item.icon} />
                      {item.label}
                    </TreeButton>
                  </TreeRow>
                </li>
              ))}
            </Branch>
          )}
        </li>
      ))}
    </NavList>
  );
}

function PropertyRow({ row }) {
  return (
    <tr>
      <RowNo scope="row" $current={row.current}>
        {row.no}
      </RowNo>
      <NameCell $color={row.color} $current={row.current}>
        <NameLine $child={row.child} $toggle={row.toggle}>
          {row.toggle && (
            <Toggle aria-label={row.name}>
              <Glyph $w={7} viewBox="0 0 7 7">
                <path d={row.toggle === "+" ? "M0 3.500h7M3.500 0v7" : "M0 3.500h7"} stroke="#000" />
              </Glyph>
            </Toggle>
          )}
          {row.child && (
            <Glyph $w={17} $h={18} viewBox="0 0 17 18">
              <path d={row.last ? "M.5 0v9.500H17" : "M.5 0v18M0 9.500h17"} fill="none" stroke="#b0b0b0" />
            </Glyph>
          )}
          {row.name}
        </NameLine>
      </NameCell>
      <ValueCell $current={row.current}>
        {row.value}
        {row.steel && (
          <SteelMark>
            亜<sup>FE</sup>
          </SteelMark>
        )}
        {row.steel}
      </ValueCell>
      <BoxCell>{!row.noBox && <Check type="checkbox" aria-label={row.name} />}</BoxCell>
    </tr>
  );
}

function Stirrup() {
  return (
    <StirrupWindow>
      <figcaption>箍筋图</figcaption>
      <StirrupCanvas width="253" height="244" viewBox="0 0 251 242" fill="none">
        <path d="M54.500 12.500h160v180h-160z" stroke="#fff" />
        <path d="M63 21h143v162H63z" stroke="#f00" strokeWidth="2" />
        <g fill="#f00">
          <circle cx="66" cy="24" r="4" />
          <circle cx="202" cy="24" r="4" />
          <circle cx="66" cy="180" r="4" />
          <circle cx="202" cy="180" r="4" />
        </g>
        <path d="M192 30l8-7M198 36l7-10" stroke="#f00" strokeWidth="2" />
        <path d="M59 56l5-3 5-1 3-3" stroke="#fff" />
        <path d="M60 53.500l3-3 3 3-3 3z" fill="#fff" />
        <g fill="#fff">
          <text x="69" y="49" fontSize="17">1#</text>
          <text x="40" y="118" fontSize="15" transform="rotate(-90 45 113)">H</text>
          <text x="126" y="206" fontSize="15">B</text>
          <text x="92" y="227" fontSize="22">2-1型</text>
        </g>
      </StirrupCanvas>
    </StirrupWindow>
  );
}

function Overlays() {
  return (
    <>
      <ImeBar>
        <ImeLogo width="28" height="28" viewBox="0 0 28 28" fill="none">
          <path d="M2 5q0-2 2-2L21 0q3 0 3 2l3 17q0 3-3 4L8 27q-3 0-3-3z" fill="#f4511e" />
          <path d="M22 5C16 4 8 5 8 9c0 5 13 2 13 7 0 4-8 5-13 4" stroke="#fff" strokeWidth="3.600" />
        </ImeLogo>
        <ImeMode>英</ImeMode>
        <Glyph $w={15} viewBox="0 0 16 16">
          <circle cx="4" cy="6" r="2" fill="#1c74c8" />
          <path d="M10 8.500h3.500q0 4-3 5 1.500-2.500-.5-3z" fill="#1c74c8" />
        </Glyph>
        <Glyph $w={16} viewBox="0 0 16 16" fill="none" stroke="#1c74c8" strokeWidth="1.500">
          <circle cx="8" cy="8" r="7" />
          <path d="M4.500 9.500q3.500 4 7 0M5.500 5v2.500M10.500 5v2.500" />
        </Glyph>
        <Glyph $w={14} $h={16} viewBox="0 0 14 16" fill="none" stroke="#1c74c8" strokeWidth="1.500">
          <rect x="4" y="0" width="6" height="10" rx="3" fill="#1c74c8" stroke="none" />
          <path d="M1.500 6.500q0 6 5.500 6t5.500-6M7 12v3.500M4 15.500h6" />
        </Glyph>
        <Glyph $w={16} viewBox="0 0 16 16">
          <rect y="2" width="16" height="12" rx="1" fill="#1c74c8" />
          <path d="M2 5h12M2 8h12" stroke="#fff" strokeWidth="1.600" strokeDasharray="2 1" />
          <path d="M4 11.500h8" stroke="#fff" strokeWidth="1.600" />
        </Glyph>
        <Glyph $w={17} $h={16} viewBox="0 0 17 16">
          <circle cx="7" cy="4" r="3.500" fill="#b4bfd4" />
          <path d="M1 14q0-6 6-6 4 0 5 2H6v4z" fill="#b4bfd4" />
          <path d="M7.500 10.500H10v2H7.500v2H10M12 10v4.500h3.500V10" fill="none" stroke="#b4bfd4" />
        </Glyph>
        <Glyph $w={15} viewBox="0 0 16 16">
          <path d="M5 1q3 2 6 0l5 3-2 4-2-1v8H4V7L2 8 0 4z" fill="#1c74c8" />
        </Glyph>
        <Glyph $w={15} viewBox="0 0 16 16">
          <path d="M2.500 13.500l6-6" stroke="#1c74c8" strokeWidth="3.500" strokeLinecap="round" />
          <path d="M14.500 3.500A4 4 0 1 1 11 1" fill="none" stroke="#1c74c8" strokeWidth="3" />
        </Glyph>
      </ImeBar>
      <Score>69</Score>
      <NetPill>
        <Glyph $w={38} viewBox="0 0 38 38" fill="none" stroke="#fff" strokeWidth="3">
          <circle cx="19" cy="19" r="19" fill="#27cb74" stroke="none" />
          <path d="M6 16a18 18 0 0 1 26 0M10.500 20.500a12 12 0 0 1 17 0M14.500 25a6.500 6.500 0 0 1 9 0" />
          <circle cx="19" cy="28.500" r="2" fill="#fff" stroke="none" />
        </Glyph>
        <div>
          <NetLine>
            <Glyph $w={10} $h={12} viewBox="0 0 10 12" fill="none" strokeWidth="2">
              <path d="M3.500 0v11M.5 7l3 4" stroke="#27cb74" />
              <path d="M6.500 12V1M9.500 5l-3-4" stroke="#f07f1c" />
            </Glyph>
            0.00K/s
          </NetLine>
          <NetLine>
            <Glyph $w={10} $h={12} viewBox="0 0 10 12" fill="none">
              <path d="M2 3h6v8H2z" stroke="#1dbf68" strokeWidth="2" />
              <path d="M2 7h6v4H2zM1 0h2v3H1z" fill="#1dbf68" />
            </Glyph>
            0
          </NetLine>
        </div>
      </NetPill>
    </>
  );
}

function Taskbar() {
  return (
    <TaskBar>
      <StartButton aria-label="开始">
        <Glyph $w={16} viewBox="0 0 16 16" fill="#fff">
          <path d="M0 2.300l6.500-.9v6.100H0zM7.300 1.300L16 0v7.500H7.300zM0 8.300h6.500v6.200L0 13.600zM7.300 8.300H16V16l-8.700-1.300z" />
        </Glyph>
      </StartButton>
      <TaskSearch>
        <Glyph $w={22} viewBox="0 0 22 22">
          <circle cx="11" cy="11" r="9" fill="none" stroke="#fff" strokeWidth="2.500" />
        </Glyph>
        <TaskInput placeholder="在这里输入你要搜索的内容" />
        <Glyph $w={14} $h={18} viewBox="0 0 14 18" fill="none" stroke="#aaa">
          <rect x="4.500" y="1.500" width="5" height="10" rx="2" />
          <path d="M2 8v3q0 3 3 3h4q3 0 3-3V8M7 14v3M4 16.500h6" />
        </Glyph>
      </TaskSearch>
      <TaskApp $w={48} aria-label="任务视图">
        <Glyph $w={20} $h={14} viewBox="0 0 20 14" fill="none" stroke="#fff">
          <path d="M4.500.5h11v13h-11zM3 2.500H.5v9H3M17 2.500h2.500v9H17" />
        </Glyph>
      </TaskApp>
      <TaskApp $w={54} aria-label="应用">
        <Glyph $w={22} viewBox="0 0 22 22">
          <g fill="#e4e4e4">
            <path d="M10.500 10.500H6A5 5 0 0 1 6 1q4.500 0 4.500 4z" />
            <path d="M11.500 9V6q0-5 5-5a4.500 4.500 0 0 1 3 8q-2 1.500-8 0z" />
            <path d="M11.500 11.500H16a5 5 0 0 1 0 9.500q-4.500 0-4.500-4z" />
            <path d="M10.500 13v3q0 5-5 5a4.500 4.500 0 0 1-3-8q2-1.500 8 0z" />
          </g>
        </Glyph>
      </TaskApp>
      <TaskApp $w={49} aria-label="浏览器">
        <Glyph $w={22} viewBox="0 0 22 22" fill="none">
          <path d="M18.500 15.500a8 8 0 1 1 .8-4H7" stroke="#e4e4e4" strokeWidth="3.400" />
          <path d="M15 2c4-2 6-1 5.500 2M3 15c-2 4-1 6 3 5" stroke="#e4e4e4" strokeWidth="1.300" />
        </Glyph>
      </TaskApp>
      <TaskApp $w={50} aria-label="旋风">
        <Glyph $w={20} viewBox="0 0 20 20" fill="none" stroke="#d0d0d0">
          <path d="M19 3c-3-1-5-2-9-1.500-9 1-11 11-4.500 15 5 3 12 0 12-5.500 0-4-6-5.500-8-2-1.500 3 2 5 4 3" strokeWidth="1.300" />
          <path d="M19 3c-8-.5-13 2-13.500 6.500-.4 5 6 6.500 9 3" />
        </Glyph>
      </TaskApp>
      <TaskApp $w={54} aria-label="Edge">
        <Glyph $w={22} viewBox="0 0 22 22">
          <path d="M1 10C2 4 6 1 11.500 1 17 1 21 5 21 10v3H8c0 5 7 6 11 3v4c-6 3-16 2-16-6 0-4 3-6 5-7-1 1-1.500 2-1.500 3H15c0-6-9-6-14 0z" fill="#0b78d6" />
        </Glyph>
      </TaskApp>
      <TaskApp $w={47} aria-label="Internet Explorer">
        <Glyph $w={24} viewBox="0 0 24 24" fill="none">
          <path d="M20 17.500a8.500 8.500 0 1 1 .8-4.500H8" stroke="#3a9be8" strokeWidth="3.600" />
          <path d="M2 22C-1 16 8 4 18 1.500c4-1 5 1 3.500 4" stroke="#f0c030" strokeWidth="2" />
        </Glyph>
      </TaskApp>
      <TaskApp $w={48} aria-label="文件资源管理器">
        <Glyph $w={22} $h={18} viewBox="0 0 22 18">
          <path d="M0 0h8l1 2h13v16H0z" fill="#fce08a" />
          <path d="M1 1h7v1.500H1z" fill="#d8a53a" />
          <path d="M4 18v-7h14v7h-4v-3H8v3z" fill="#36a0dc" />
        </Glyph>
      </TaskApp>
      <TaskApp $w={50} $open aria-label="广联达">
        <Glyph $w={24} viewBox="0 0 24 24" fill="none">
          <path d="M20 3.500C9 0 3 5 3 12c0 6 4 9 8.500 9 5 0 8-3 8-6.500 0-3-2.500-4.500-5-3" stroke="#2aa0f2" strokeWidth="4" />
          <path d="M23 2c-2 4-9 2-12 5-3 4-1 8 3 8" stroke="#1276d2" strokeWidth="2" />
        </Glyph>
      </TaskApp>
      <TaskApp $w={50} $open aria-label="安全浏览器">
        <Glyph $w={24} viewBox="0 0 24 24" fill="none">
          <circle cx="12" cy="12" r="10" fill="#4fb82e" stroke="#e8f8e0" strokeWidth="1.500" />
          <path d="M16.500 15.500a5.500 5.500 0 1 1 .8-3.500H8" stroke="#fff" strokeWidth="2.200" />
          <path d="M3 20C-1 23 3 9 21 2" stroke="#8ee05c" />
        </Glyph>
      </TaskApp>
      <TaskApp $w={48} $active aria-label="钢筋算量">
        <Icon name="fileLogo" size={24} />
      </TaskApp>
      <Tray>
        <TrayItem $w={44}>链接</TrayItem>
        <TrayItem $w={72} $two>
          <span>35%</span>
          <span>CPU使用</span>
        </TrayItem>
        <TrayItem $w={40}>
          <Glyph $w={20} $h={16} viewBox="0 0 20 16" fill="none" stroke="#5fd31c" strokeWidth="2.400">
            <path d="M1.500 5.500a12 12 0 0 1 17 0M5 9.500a7 7 0 0 1 10 0" />
            <circle cx="10" cy="13.500" r="2" fill="#5fd31c" stroke="none" />
          </Glyph>
        </TrayItem>
        <TrayItem $w={16}>
          <Glyph $w={12} $h={8} viewBox="0 0 12 8" fill="none" stroke="#fff" strokeWidth="1.300">
            <path d="M.5 7L6 1.500 11.500 7" />
          </Glyph>
        </TrayItem>
        <TrayItem $w={31}>
          <Glyph $w={15} $h={9} viewBox="0 0 15 9" fill="none">
            <path d="M.5.5h12v8H.5zM13 3h1.500v3H13" stroke="#fff" />
            <path d="M2 2h5v5H2z" fill="#fff" />
          </Glyph>
        </TrayItem>
        <TrayItem $w={18}>
          <Glyph $w={13} viewBox="0 0 13 13" fill="none" stroke="#ddd">
            <path d="M.5 12A12 12 0 0 1 12 1M3.500 12A9 9 0 0 1 12 4M6.500 12A6 6 0 0 1 12 7" />
            <circle cx="10.500" cy="11" r="1.500" fill="#fff" stroke="none" />
          </Glyph>
        </TrayItem>
        <TrayItem $w={26}>
          <Glyph $w={16} $h={14} viewBox="0 0 16 14" fill="none" stroke="#fff">
            <path d="M.5 5v4H3l3 3V2L3 5zM8.500 5q1.500 2 0 4M10.500 3q3 4 0 8" />
            <path d="M12.500 1q5 6 0 12" stroke="#888" />
          </Glyph>
        </TrayItem>
        <TrayItem $w={30}>
          <Glyph $w={23} $h={13} viewBox="0 0 23 13" fill="none" stroke="#fff">
            <path d="M.5.5h22v12H.5z" />
            <path d="M3 3.500h17M3 6.500h17" strokeDasharray="1 1" />
            <path d="M3 9.500h2M7 9.500h9M18 9.500h2" />
          </Glyph>
        </TrayItem>
        <TrayItem $w={28}>中</TrayItem>
        <TrayItem $w={28}>
          <Glyph $w={16} viewBox="0 0 16 16" fill="none">
            <path d="M0 2l14-2 2 13-13 3z" fill="#ec4a1c" />
            <path d="M12.500 4C9 3 4 3.500 4.500 6s7 1 7 4-5 2.500-7.500 2" stroke="#fff" strokeWidth="2" />
          </Glyph>
        </TrayItem>
        <TrayItem $w={82} $two>
          <span>11:27</span>
          <span>2018/6/16</span>
        </TrayItem>
        <TrayItem $w={44}>
          <Glyph $w={24} viewBox="0 0 24 24">
            <path d="M1 2h15v11H8v4l-4-4H1z" fill="#fff" />
            <path d="M3 5h11M3 7.500h11M3 10h11" stroke="#000" />
            <circle cx="16" cy="16" r="7.500" fill="#333" stroke="#888" />
            <text x="13" y="20" fill="#fff" fontSize="11">1</text>
          </Glyph>
        </TrayItem>
        <ShowDesktop aria-label="显示桌面" />
      </Tray>
    </TaskBar>
  );
}

export default function App() {
  return (
    <>
      <GlobalStyle />
      <Page>
        <TitleBar>
          <Icon name="fileLogo" />
          <span>广联达BIM钢筋算量软件 GGJ2013 -</span>
          <FilePath>
            [C:\Users\Administrator.PC-20141127NRHM\Desktop\白龙村-2018-02-02-19-24-35(2666版).GGJ12]
          </FilePath>
          <WindowButtons>
            <WindowButton aria-label="最小化">
              <Glyph $w={10} viewBox="0 0 10 10">
                <path d="M0 5.500h10" stroke="#000" />
              </Glyph>
            </WindowButton>
            <WindowButton aria-label="还原">
              <Glyph $w={10} viewBox="0 0 10 10" fill="none" stroke="#000">
                <path d="M.5 2.500h7v7h-7zM2.500 2.500v-2h7v7h-2" />
              </Glyph>
            </WindowButton>
            <WindowButton aria-label="关闭">
              <Glyph $w={10} viewBox="0 0 10 10">
                <path d="M0 0l10 10M10 0L0 10" stroke="#000" />
              </Glyph>
            </WindowButton>
          </WindowButtons>
        </TitleBar>

        <MenuBar>
          <MenuGroup>
            {menus.map((menu) => (
              <MenuButton key={menu}>{menu}</MenuButton>
            ))}
          </MenuGroup>
          <Promo>
            <Icon name="addCase" />
            <MenuButton>新建变更</MenuButton>
          </Promo>
          <Promo>
            <Spacer $min={8} />
            <Icon name="helper" />
            <MenuButton>广小二</MenuButton>
          </Promo>
          <Tip href="#tip">如何处理筏板附加钢筋..</Tip>
          <Account>
            <Icon name="user" />
            13907298339
            <Arrow $wide />
            <BeanButton>造价豆:0</BeanButton>
            <Icon name="bell" />
            <Spacer />
            <More />
          </Account>
        </MenuBar>

        <ToolRow>
          <ToolStrip $left={5} $right={3} $min={151}>
            <Tool icon="newFile" />
            <Tool icon="openFile" arrow="wide" />
            <Tool icon="save" />
            <Divider $h={24} />
            <Tool icon="undo" arrow="wide" />
            <Spacer />
            <More />
          </ToolStrip>
          <ToolStrip>
            {drawTools.map((tool) => (
              <Tool key={tool.label} {...tool} />
            ))}
            <Spacer $min={23} />
            <More />
          </ToolStrip>
          <ToolStrip $grow $left={1}>
            <ToolButton $off $framed>
              <Icon name="flat" />
              二维
              <Arrow $wide />
            </ToolButton>
            {viewTools.map((tool, i) =>
              tool.sep ? <Divider key={i} /> : <Tool key={i} off {...tool} />
            )}
            <Spacer />
            <More />
          </ToolStrip>
        </ToolRow>

        <Body>
          <NavPanel>
            <NavTitle>
              模块导航栏
              <Spacer />
              <NavTitleButton aria-label="固定">
                <Glyph $w={9} viewBox="0 0 9 9" fill="none" stroke="#fff">
                  <path d="M2.500 5.500v-5h4v5M1 5.500h7M4.500 6v3M5.500 1v4" />
                </Glyph>
              </NavTitleButton>
              <NavTitleButton aria-label="关闭">
                <Glyph $w={8} viewBox="0 0 8 8">
                  <path d="M.5.5l7 7M7.500.5l-7 7" stroke="#fff" />
                </Glyph>
              </NavTitleButton>
            </NavTitle>
            <NavSection>工程设置</NavSection>
            <NavSection>绘图输入</NavSection>
            <NavTools>
              <ToolButton aria-label="全部展开">
                <Glyph $w={16} viewBox="0 0 16 16">
                  <path d="M4.500 0v9M0 4.500h9M11.500 7v9M7 11.500h9" stroke="#000" strokeWidth="3" />
                  <path d="M4.500 1v7M1 4.500h7M11.500 8v7M8 11.500h7" stroke="#0aa08c" />
                </Glyph>
              </ToolButton>
              <ToolButton aria-label="全部折叠">
                <Glyph $w={16} viewBox="0 0 16 16">
                  <path d="M0 4.500h9M7 11.500h9" stroke="#000" strokeWidth="3" />
                  <path d="M1 4.500h7M8 11.500h7" stroke="#0aa08c" />
                </Glyph>
              </ToolButton>
            </NavTools>
            <NavTreeBox>
              <NavTree />
              <VScroll>
                <ScrollButton aria-label="向上">
                  <Chevron dir="up" />
                </ScrollButton>
                <Thumb $share={349} />
                <Spacer $share={84} />
                <ScrollButton aria-label="向下">
                  <Chevron dir="down" />
                </ScrollButton>
              </VScroll>
              <HScroll>
                <ScrollButton aria-label="向左">
                  <Chevron dir="left" />
                </ScrollButton>
                <Thumb $share={102} />
                <Spacer $share={6} />
                <ScrollButton aria-label="向右">
                  <Chevron dir="right" />
                </ScrollButton>
              </HScroll>
              <Corner />
            </NavTreeBox>
            <NavSection>单构件输入</NavSection>
            <NavSection>报表预览</NavSection>
          </NavPanel>

          <WorkArea>
            <ToolStrip>
              <Tool icon="create" label="新建" arrow="tight" />
              <Tool icon="remove" label="删除" />
              <Tool icon="copy" label="复制" />
              <Tool icon="rename" label="重命名" />
              <Divider />
              <FloorLabel htmlFor="floor">楼层</FloorLabel>
              <FloorSelect id="floor">
                <option>首层</option>
              </FloorSelect>
              <Divider />
              <Tool icon="sort" label="排序" arrow="tight" />
              <Tool icon="filter" label="过滤" arrow="tight" />
              <Divider />
              <Tool icon="copyFrom" label="从其他楼层复制构件" />
              <Tool icon="copyTo" label="复制构件到其他楼层" />
              <Divider />
              <Tool label="查找" arrow="tight" />
              <Divider />
              <Tool icon="moveUp" label="上移" off />
              <Tool icon="moveDown" label="下移" />
            </ToolStrip>
            <Panes>
              <ListPane>
                <SearchRow>
                  <SearchInput placeholder="搜索构件..." aria-label="搜索构件" />
                  <SearchButton type="button" aria-label="搜索">
                    <Icon name="search" />
                  </SearchButton>
                </SearchRow>
                <MemberTree>
                  <TreeRow $indent={6}>
                    <Chevron dir="down" />
                    <Dots />
                    <TreeButton $flush>
                      <Icon name="lintel" />
                      过梁
                    </TreeButton>
                  </TreeRow>
                  <Branch $root>
                    {members.map((member, i) => (
                      <li key={member}>
                        <TreeRow>
                          <Elbow last={i === members.length - 1} />
                          <TreeButton $bg={i === 0 && "#316ac5"}>
                            <Icon name="gear" />
                            {member}
                          </TreeButton>
                        </TreeRow>
                      </li>
                    ))}
                  </Branch>
                </MemberTree>
              </ListPane>

              <Editor>
                <Tabs>
                  <Tab>属性编辑</Tab>
                </Tabs>
                <GridFrame>
                  <Grid>
                    <Table>
                      <colgroup>
                        <col width="21" />
                        <col width="191" />
                        <col width="126" />
                        <col width="31" />
                      </colgroup>
                      <thead>
                        <tr>
                          <th aria-label="序号" />
                          <th>属性名称</th>
                          <ValueHead>属性值</ValueHead>
                          <th>附加</th>
                        </tr>
                      </thead>
                      <tbody>
                        {properties.map((row) => (
                          <PropertyRow key={row.no} row={row} />
                        ))}
                      </tbody>
                    </Table>
                    <Stirrup />
                  </Grid>
                </GridFrame>
                <RedFrame />
              </Editor>
            </Panes>
          </WorkArea>
        </Body>

        <StatusBar>
          <StatusCell $w={147} />
          <StatusCell $w={77}>层高:4.5m</StatusCell>
          <StatusCell $w={97}>底标高:-0.05m</StatusCell>
          <StatusCell $w={47}>0</StatusCell>
          <StatusCell $grow>输入范围: (0,30000]之间的整数</StatusCell>
          <StatusCell $w={70}>75.3 FPS</StatusCell>
        </StatusBar>

        <Taskbar />
        <Overlays />
      </Page>
    </>
  );
}
